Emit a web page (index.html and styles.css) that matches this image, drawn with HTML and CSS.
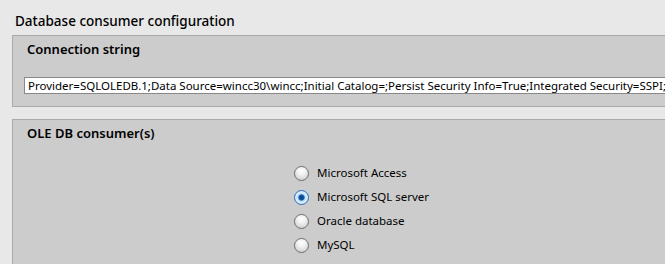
FILE: index.html
```html
<!DOCTYPE html>
<html>
<head>
<meta charset="utf-8">
<link rel="stylesheet" href="styles.css">
</head>
<body>
<div class="page">
  <div class="title">Database consumer configuration</div>
  <section class="panel conn">
    <div class="heading">Connection string</div>
    <div class="input">Provider=SQLOLEDB.1;Data Source=wincc30\wincc;Initial Catalog=;Persist Security Info=True;Integrated Security=SSPI;</div>
  </section>
  <section class="panel ole">
    <div class="heading">OLE DB consumer(s)</div>
    <div class="radios">
      <label class="radio"><span class="dot"></span><span class="lbl">Microsoft Access</span></label>
      <label class="radio checked"><span class="dot"></span><span class="lbl">Microsoft SQL server</span></label>
      <label class="radio"><span class="dot"></span><span class="lbl">Oracle database</span></label>
      <label class="radio"><span class="dot"></span><span class="lbl">MySQL</span></label>
    </div>
  </section>
</div>
</body>
</html>
```
FILE: styles.css
```css
html, body {
  margin: 0;
  padding: 0;
  background: #e8e8e8;
  overflow: hidden;
}
.page {
  width: 665px;
  height: 264px;
  overflow: hidden;
  font-family: "Noto Sans", "Open Sans", sans-serif;
  color: #000;
}
.title {
  padding: 11px 0 0 15px;
  height: 35px;
  box-sizing: border-box;
  font-size: 13.5px;
  line-height: 20px;
  font-weight: 500;
}
.panel {
  margin-left: 12px;
  width: 700px;
  background: #cccccc;
  border: 1px solid #aaaaaa;
  border-right: none;
  box-sizing: border-box;
}
.heading {
  padding: 3px 0 0 14px;
  font-size: 13px;
  line-height: 20px;
  font-weight: 600;
}
.conn {
  height: 72px;
  margin-bottom: 12px;
}
.input {
  margin: 18px 0 0 11px;
  height: 17px;
  box-sizing: border-box;
  background: #fff;
  border: 1px solid #888;
  border-right: none;
  font-size: 11.5px;
  line-height: 15px;
  padding-left: 3px;
  white-space: nowrap;
  overflow: hidden;
}
.ole {
  height: 200px;
}
.radios {
  display: flex;
  flex-direction: column;
  gap: 10px;
  padding: 23px 0 0 281px;
}
.radio {
  display: flex;
  align-items: center;
  gap: 8px;
  height: 14px;
  font-size: 11.5px;
}
.dot {
  width: 15px;
  height: 15px;
  box-sizing: border-box;
  border-radius: 50%;
  border: 1px solid #6e6e6e;
  background: radial-gradient(circle at 50% 30%, #ffffff 0%, #f2f2f2 35%, #c4c4c4 100%);
}
.checked .dot {
  border-color: #2f6fb8;
  background: radial-gradient(circle at 50% 50%, #0b3f86 0%, #1458a8 28%, #b9dcf6 40%, #dff0fc 60%, #8fc2ea 100%);
}
.lbl {
  line-height: 14px;
}
```
